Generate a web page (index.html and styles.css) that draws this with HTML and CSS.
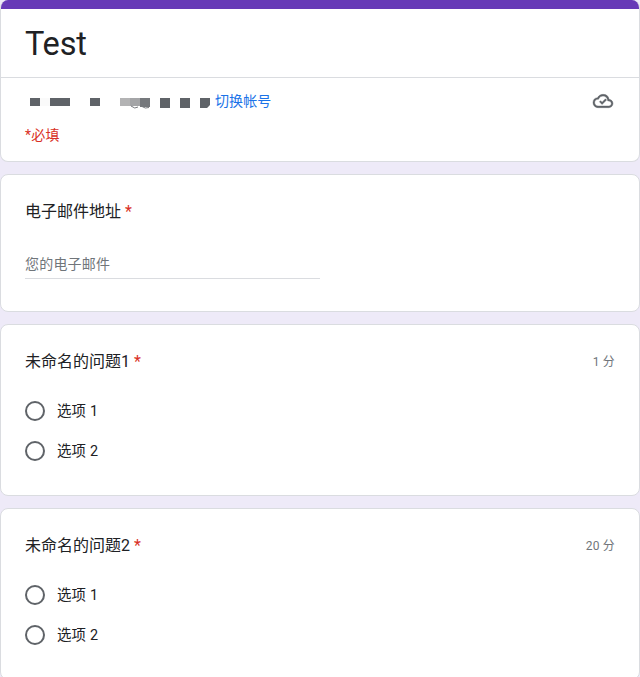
FILE: index.html
```html
<!DOCTYPE html>
<html lang="zh-CN">
<head>
<meta charset="utf-8">
<title>Test</title>
<link rel="stylesheet" href="styles.css">
</head>
<body>
<main class="form">
  <header class="card header">
    <div class="accent"></div>
    <h1 class="title">Test</h1>
    <div class="account">
      <svg class="redacted" width="182" height="12" viewBox="0 0 182 12" fill="#5f6368">
        <path d="M2 1h10v8H2zM22 1h20v8H22zM62 1h10v8H62zM132 1h10v10H132zM152 1h10v10H152zM172 1h10v7l-3 3h-7z"/>
        <path fill="#fafafa" d="M12 1h10v8H12z"/>
        <path fill="#b3b3b4" d="M92 1h10v8H92z"/>
        <path fill="#a4a5a7" d="M102 1h10v8H102z"/>
        <path fill="#75787c" d="M112 1h10v9H112z"/>
        <path fill="none" stroke="#777a7e" d="M103 9q4 3.500 7 1M114 9.500q3 2.500 7 1"/>
      </svg>
      <a class="switch">切换帐号</a>
      <svg class="cloud" width="20" height="20" viewBox="0 0 24 24" fill="#5f6368" stroke="#5f6368" stroke-width=".5">
        <path d="M19.35 10.04A7.49 7.49 0 0 0 12 4C9.11 4 6.6 5.64 5.35 8.04A5.994 5.994 0 0 0 0 14c0 3.31 2.69 6 6 6h13c2.76 0 5-2.24 5-5 0-2.64-2.05-4.78-4.65-4.96zM19 18H6c-2.21 0-4-1.79-4-4 0-2.05 1.53-3.76 3.56-3.97l1.07-.11.5-.95A5.469 5.469 0 0 1 12 6c2.62 0 4.88 1.86 5.39 4.43l.3 1.5 1.53.11A2.98 2.98 0 0 1 22 15c0 1.65-1.35 3-3 3z"/>
        <path d="M10.900 16.200l-3.200-3.200 1.400-1.400 1.800 1.800 4-4 1.400 1.400z"/>
      </svg>
    </div>
    <div class="required">*必填</div>
  </header>

  <section class="card email">
    <h2 class="question">电子邮件地址 <span class="star">*</span></h2>
    <div class="field">您的电子邮件</div>
  </section>

  <section class="card choice">
    <div class="row"><h2 class="question">未命名的问题1 <span class="star">*</span></h2><span class="points">1 分</span></div>
    <div class="options">
      <div class="option"><span class="radio"></span><span class="label">选项 1</span></div>
      <div class="option"><span class="radio"></span><span class="label">选项 2</span></div>
    </div>
  </section>

  <section class="card choice">
    <div class="row"><h2 class="question">未命名的问题2 <span class="star">*</span></h2><span class="points">20 分</span></div>
    <div class="options">
      <div class="option"><span class="radio"></span><span class="label">选项 1</span></div>
      <div class="option"><span class="radio"></span><span class="label">选项 2</span></div>
    </div>
  </section>
</main>
</body>
</html>
```
FILE: styles.css
```css
* { box-sizing: border-box; }
html { height: 100%; overflow: hidden; }
body {
  margin: 0;
  height: 100%;
  overflow: hidden;
  background: #eeeaf8;
  color: #202124;
  font-family: Roboto, "Noto Sans CJK SC", sans-serif;
}
.form { display: flex; flex-direction: column; gap: 12px; }
.card {
  flex: none;
  background: #fff;
  border: 1px solid #dadce0;
  border-radius: 8px;
  padding: 0 24px;
}
.header { height: 162px; padding: 0; border-top: 0; overflow: hidden; }
.accent { height: 9px; margin: 0 -1px; background: #673ab7; }
.title {
  margin: 0;
  height: 69px;
  padding: 0 24px;
  border-bottom: 1px solid #dadce0;
  font-size: 32.5px;
  font-weight: 400;
  letter-spacing: -.2px;
  line-height: 70px;
}
.account { display: flex; align-items: center; height: 46px; padding: 0 26px 0 27px; }
.redacted { margin-top: 3px; }
.switch { margin-left: 5px; color: #1a73e8; font-size: 14px; letter-spacing: .1px; line-height: 20px; }
.cloud { margin-left: auto; overflow: visible; }
.required { padding: 0 24px; color: #d93025; font-size: 14px; letter-spacing: .2px; line-height: 22px; }
.question { margin: 0; font-size: 16px; font-weight: 400; line-height: 24px; }
.star { color: #d93025; }
.email { height: 138px; padding-top: 25px; }
.field {
  width: 295px;
  height: 28px;
  margin-top: 27px;
  border-bottom: 1px solid #dadce0;
  color: #70757a;
  font-size: 14px;
  letter-spacing: .2px;
  line-height: 27px;
}
.choice { height: 172px; padding-top: 25px; }
.row { display: flex; justify-content: space-between; height: 24px; }
.points { color: #70757a; font-size: 12px; letter-spacing: .2px; line-height: 24px; }
.options { margin-top: 17px; }
.option {
  display: flex;
  align-items: center;
  height: 40px;
  font-size: 14.4px;
  letter-spacing: .2px;
}
.label { height: 20px; line-height: 21px; }
.radio { width: 20px; height: 20px; margin-right: 12px; border: 2px solid #5f6368; border-radius: 50%; }
```
